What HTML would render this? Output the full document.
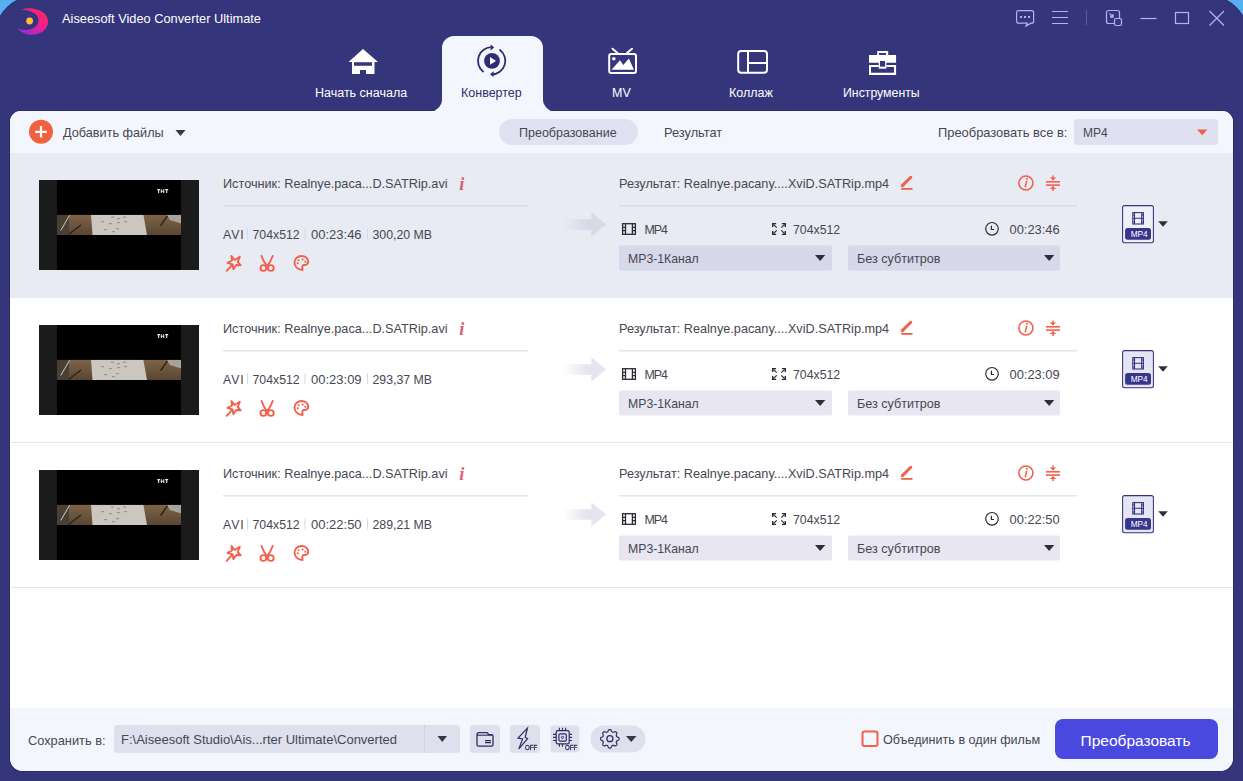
<!DOCTYPE html>
<html><head><meta charset="utf-8">
<style>
*{margin:0;padding:0;box-sizing:border-box}
html,body{width:1243px;height:781px;overflow:hidden;background:#35357b}
body{position:relative;font-family:"Liberation Sans",sans-serif;color:#474751}
.a{position:absolute}
.t{position:absolute;white-space:nowrap;line-height:1}
svg{position:absolute;overflow:visible}
.nav{color:#fff;font-size:12.5px;margin-top:1px}
.panel{left:10px;top:111px;width:1223px;height:659.6px;background:#fff;border-radius:11px 11px 13px 13px;overflow:hidden;box-shadow:0 0 0 1px #2d2d66}
.tb{left:0;top:0;width:1223px;height:42px;background:#f4f6fd}
.bb{left:0;top:597px;width:1223px;height:63px;background:#f4f6fd}
.row{left:0;width:1223px;height:145px}
.dd{background:#dadcea;border-radius:2px}
.or{fill:none;stroke:#f0604a}
</style></head><body>
<!-- desktop corners -->
<svg style="left:0;top:0" width="1243" height="30" viewBox="0 0 1243 30">
  <path d="M0 0 H18 Q7 5 0 17 Z" fill="#58aef2"/>
  <path d="M18 0 Q7 5 0 17" fill="none" stroke="#26306e" stroke-width="1.2"/>
  <path d="M1243 0 H1225.5 Q1236 5 1243 16.5 Z" fill="#58aef2"/>
  <path d="M1225.5 0 Q1236 5 1243 16.5" fill="none" stroke="#26306e" stroke-width="1.2"/>
</svg>

<!-- title bar -->
<svg style="left:0;top:0" width="1243" height="40" viewBox="0 0 1243 40">
  <defs>
    <linearGradient id="lg1" x1="0" y1="1" x2="1" y2="0">
      <stop offset="0" stop-color="#8a2cf0"/><stop offset="0.6" stop-color="#f0208a"/><stop offset="1" stop-color="#ff2a5a"/>
    </linearGradient>
  </defs>
  <defs><radialGradient id="rg1"><stop offset="0" stop-color="#3030a0"/><stop offset="1" stop-color="#35357b" stop-opacity="0"/></radialGradient>
  <filter id="bl1" x="-20%" y="-20%" width="140%" height="140%"><feGaussianBlur stdDeviation="0.5"/></filter></defs>
  <circle cx="29" cy="21" r="11" fill="url(#rg1)"/>
  <path d="M21 9.5 C33 5.5 47.5 11 48 21 C48.5 30 39 36 28 34.5 C23 33.8 19.5 31 17.5 28 C23 31.5 37 31 38.5 21 C39.5 13 29 10 21 9.5Z" fill="url(#lg1)" filter="url(#bl1)"/>
  <circle cx="29.6" cy="21" r="3.4" fill="#ffbe2a"/>
</svg>
<div class="t" style="left:62px;top:13px;font-size:12.8px;color:#fff">Aiseesoft Video Converter Ultimate</div>

<svg style="left:0;top:0" width="1243" height="40" viewBox="0 0 1243 40" fill="none" stroke="#b5b3ee" stroke-width="1.2">
  <!-- chat -->
  <path d="M1018.6 10.6 H1031.6 Q1033.6 10.6 1033.6 12.6 V21.2 Q1033.6 23.2 1031.6 23.2 H1031 L1026 26 L1027.2 23.2 H1018.6 Q1016.6 23.2 1016.6 21.2 V12.6 Q1016.6 10.6 1018.6 10.6Z"/>
  <rect x="1020" y="16" width="2" height="2" fill="#b5b3ee" stroke="none"/>
  <rect x="1024" y="16" width="2" height="2" fill="#b5b3ee" stroke="none"/>
  <rect x="1028" y="16" width="2" height="2" fill="#b5b3ee" stroke="none"/>
  <!-- menu -->
  <path d="M1052 11.5 H1068 M1052 17.5 H1068 M1052 23.5 H1068"/>
  <!-- sep -->
  <path d="M1086.5 10 V25" stroke="#5c5aa0" stroke-width="1"/>
  <!-- mini -->
  <path d="M1114 23.5 H1108.5 Q1106.5 23.5 1106.5 21.5 V12.5 Q1106.5 10.5 1108.5 10.5 H1117.5 Q1119.5 10.5 1119.5 12.5 V18"/>
  <rect x="1114.5" y="18.5" width="7" height="7" rx="1.5"/>
  <path d="M1109.5 13.5 L1113 17 M1113 14 V17 H1110" stroke-width="1.3"/>
  <!-- min -->
  <path d="M1140.5 18.5 H1156.5"/>
  <!-- max -->
  <rect x="1175.5" y="12.5" width="13" height="11"/>
  <!-- close -->
  <path d="M1209.5 11 L1224 25.5 M1224 11 L1209.5 25.5"/>
</svg>

<!-- nav tabs -->
<svg style="left:0;top:0" width="1243" height="112" viewBox="0 0 1243 112">
  <path d="M430 111.5 A12 12 0 0 0 442 99.5 V48 A12 12 0 0 1 454 36 H531 A12 12 0 0 1 543 48 V99.5 A12 12 0 0 0 555 111.5 Z" fill="#f4f6fd"/>
  <!-- house -->
  <path d="M363 49 L348.5 62 H352 V74 H360 V70 H366 V74 H374.5 V62 H378 Z M354 62.2 V65.8 H372 V62.2 Z" fill="#fff" fill-rule="evenodd"/>
  <!-- converter -->
  <g fill="none" stroke="#2f2d70" stroke-width="1.8" stroke-linecap="round">
    <path d="M483 71.5 A13.7 13.7 0 0 1 492 47.2"/>
    <path d="M500 50 A13.7 13.7 0 0 1 492 74.5"/>
  </g>
  <path d="M490.6 44.6 L494.2 47.5 L490.6 50.4Z" fill="#2f2d70"/>
  <path d="M493.6 71.3 L490 74.2 L493.6 77.1Z" fill="#2f2d70"/>
  <circle cx="492" cy="60.8" r="7.9" fill="#2f2d78"/>
  <path d="M490 57 L496 60.9 L490 64.8Z" fill="#fff"/>
  <!-- MV -->
  <g fill="none" stroke="#fff" stroke-width="2">
    <rect x="609.2" y="54" width="26.8" height="19" rx="2"/>
    <path d="M612.5 48.7 L617.5 53 M632 48.7 L627 53" stroke-linecap="round"/>
  </g>
  <circle cx="613.8" cy="58.7" r="1.8" fill="#fff"/>
  <path d="M611.5 69.7 L620 60.2 L623.3 65.1 L628.9 58.4 L634 69.7Z" fill="#fff"/>
  <!-- collage -->
  <g fill="none" stroke="#fff" stroke-width="2">
    <rect x="738.2" y="51" width="28.8" height="21.8" rx="3"/>
    <path d="M748 51 V72.8 M748 63 H767"/>
  </g>
  <!-- tools -->
  <path d="M877.2 51 H888.2 V55.1 H896.1 V62.8 H869 V55.1 H877.2Z M879 53 V55.1 H886 V53Z" fill="#fff" fill-rule="evenodd"/>
  <path d="M869 65.1 H878.7 V68.7 H886.4 V65.1 H896.1 V75.1 H869Z M871 67.1 V72.8 H894 V67.1 H886.4 V68.7 Q886.4 68.7 886.4 68.7 H878.7 V67.1Z" fill="#fff" fill-rule="evenodd"/>
  <path d="M878.7 61 H886.4 V68.7 H878.7Z" fill="#fff"/>
  <path d="M880 61 H885.1 V66.6 H880Z" fill="#35357b"/>
</svg>
<div class="t nav" style="left:315px;top:86px">Начать сначала</div>
<div class="t nav" style="left:461px;top:86px;color:#2f2e6e">Конвертер</div>
<div class="t nav" style="left:612px;top:86px">MV</div>
<div class="t nav" style="left:729px;top:86px">Коллаж</div>
<div class="t nav" style="left:843px;top:86px;font-size:12.3px">Инструменты</div>

<!-- panel -->
<div class="a panel">
  <div class="a tb"></div>
  <div class="a row" style="top:42px;background:#e8ebf4"></div>
  <div class="a" style="left:1px;top:331px;width:1222px;height:1px;background:#e6e6ea"></div>
  <div class="a" style="left:1px;top:476px;width:1222px;height:1px;background:#e6e6ea"></div>
  <div class="a bb"></div>
</div>

<svg style="left:0;top:0" width="1243" height="120" viewBox="0 0 1243 120"><defs><clipPath id="tabc"><rect x="400" y="104" width="200" height="8"/></clipPath></defs><path clip-path="url(#tabc)" d="M430 111.5 A12 12 0 0 0 442 99.5 V48 A12 12 0 0 1 454 36 H531 A12 12 0 0 1 543 48 V99.5 A12 12 0 0 0 555 111.5 Z" fill="#f4f6fd"/><rect x="436" y="110" width="113" height="2" fill="#f4f6fd"/></svg>
<!-- ROWS START -->
<!-- row 1 -->
<div class="a" style="left:0;top:0px">
<svg style="left:0;top:150px" width="1243" height="150" viewBox="0 150 1243 150">
  <defs><clipPath id="thc0"><rect x="57" y="214.7" width="124" height="20.3"/></clipPath><filter id="thb0"><feGaussianBlur stdDeviation="0.45"/></filter><linearGradient id="wd0" x1="0" y1="0" x2="0" y2="1"><stop offset="0" stop-color="#7e6447"/><stop offset="1" stop-color="#594633"/></linearGradient></defs>
  <!-- thumbnail -->
  <rect x="39" y="180" width="160" height="90" fill="#1b1b1b"/>
  <rect x="57" y="180" width="124" height="90" fill="#000"/>
  <g clip-path="url(#thc0)" filter="url(#thb0)">
    <rect x="57" y="214.7" width="124" height="20.3" fill="url(#wd0)"/>
    <rect x="57" y="214.7" width="12" height="20.3" fill="#4a4036"/>
    <rect x="69" y="214.7" width="22" height="20.3" fill="url(#wd0)"/>
    <path d="M91 214.7 H143.4 L147 235 H92.5Z" fill="#cbc7c0"/>
    <path d="M166.5 214.7 H181 V223.5 L170 220Z" fill="#a8a29a"/>
    <path d="M69.6 215.2 L60.8 230.4" stroke="#d0cbc2" stroke-width="1"/>
    <path d="M81 225 L68.6 234.5" stroke="#2e2218" stroke-width="1.5"/>
    <path d="M167.4 215.8 L160.6 225.7" stroke="#2b2018" stroke-width="1.5"/>
    <g fill="#98948e"><rect x="111" y="216.5" width="3" height="1.2"/><rect x="117" y="218" width="3" height="1.2"/><rect x="123" y="216.5" width="3" height="1.2"/><rect x="101" y="221" width="3" height="1.2"/><rect x="109" y="223" width="3" height="1.2"/><rect x="117" y="222" width="3" height="1.2"/><rect x="104" y="229" width="3" height="1.2"/><rect x="116" y="228" width="3" height="1.2"/><rect x="124" y="221" width="3" height="1.2"/><rect x="112" y="231" width="3" height="1.2"/></g>
  </g>
  <g fill="#ececec"><path d="M157.3 189.6 H160 M158.6 189.6 V193" stroke="#ececec" stroke-width="1.1"/><rect x="160.8" y="189.2" width="1" height="3.8"/><rect x="163.2" y="189.2" width="1" height="3.8"/><rect x="160.8" y="190.8" width="3.4" height="0.9"/><path d="M165.2 189.6 H168.2 M166.7 189.6 V193" stroke="#ececec" stroke-width="1.1"/></g>
  <!-- separators -->
  <rect x="223" y="205" width="305" height="1.5" fill="#d9dae5"/>
  <rect x="619" y="205" width="458" height="1.5" fill="#d9dae5"/>
  <!-- meta separators -->
  <g fill="#dadbe4"><rect x="247" y="228.5" width="1" height="11"/><rect x="304.5" y="228.5" width="1" height="11"/><rect x="367" y="228.5" width="1" height="11"/></g>
  <!-- effect icons -->
  <g class="or" stroke-width="1.9" stroke-linejoin="round" stroke-linecap="round">
    <path d="M231.5 256 L234.6 260 L239.8 256.8 L237.7 262 L240.6 265.2 L236.2 265 L233.4 269.2 L232.6 264.4 L227.5 262.9 L232 260.5Z"/>
    <path d="M231.5 265.6 L226.6 270.8"/>
    <path d="M261.5 256 Q263.5 261.5 266.6 265.6 M272.7 256 Q270.7 261.5 267.6 265.6"/>
    <circle cx="263.4" cy="268" r="2.9"/><circle cx="270.8" cy="268" r="2.9"/>
    <path d="M302.5 270 C297 269.5 294.5 266 294.5 262.5 C294.5 258.5 298 256 301.5 256 C305.5 256 308.2 258.5 308.2 261.5 C308.2 264 306.5 265 304.2 265 C302.8 265 302 266 302.4 267.2 Z"/>
  </g>
  <g fill="#f0604a"><circle cx="298.6" cy="260.2" r="1.05"/><circle cx="302.6" cy="259.6" r="1.05"/><circle cx="305.3" cy="261.8" r="1.05"/><circle cx="297.8" cy="263.2" r="1.05"/></g>
  <!-- arrow -->
  <defs><linearGradient id="arg0" x1="0" x2="1"><stop offset="0" stop-color="#d8d9e8" stop-opacity="0"/><stop offset="0.55" stop-color="#d8d9e8"/></linearGradient></defs>
  <path d="M563 219.3 H591.4 V212.2 L606 224.5 L591.4 236.7 V229.7 H563Z" fill="url(#arg0)"/>
  <!-- pencil -->
  <path d="M902.3 185.6 L910.8 177.3" stroke="#f0604a" stroke-width="3" stroke-linecap="round"/>
  <rect x="901.2" y="188" width="11.3" height="1.8" fill="#f0604a"/>
  <!-- info / merge -->
  <circle cx="1025.9" cy="183" r="7" fill="none" stroke="#f0604a" stroke-width="1.6"/>
  <circle cx="1026.9" cy="178.8" r="1" fill="#f0604a"/>
  <path d="M1026.7 181.2 L1025.3 186.8" stroke="#f0604a" stroke-width="1.5" stroke-linecap="round"/>
  <g fill="#f0604a">
    <rect x="1046" y="181" width="14" height="1.6"/><rect x="1046" y="184.3" width="14" height="1.6"/>
    <rect x="1052.3" y="175.5" width="1.5" height="4.5"/><path d="M1049.6 177.6 H1056.4 L1053 180.3Z"/>
    <rect x="1052.3" y="186.5" width="1.5" height="4.5"/><path d="M1049.6 188.9 H1056.4 L1053 186.2Z"/>
  </g>
  <!-- film / resize / clock -->
  <g fill="none" stroke="#2b2b33" stroke-width="1.3">
    <rect x="622.6" y="223.7" width="12.8" height="10.6"/>
    <path d="M625.5 223.7 V234.3 M632.4 223.7 V234.3 M622.6 227.3 H625.5 M622.6 230.6 H625.5 M632.4 227.3 H635.4 M632.4 230.6 H635.4"/>
    <path d="M772.7 227 V223.6 H776.1 M785.3 227 V223.6 H781.9 M772.7 231 V234.4 H776.1 M785.3 231 V234.4 H781.9" stroke-width="1.4"/>
    <path d="M773.4 224.3 L776.7 227.6 M784.6 224.3 L781.3 227.6 M773.4 233.7 L776.7 230.4 M784.6 233.7 L781.3 230.4" stroke-width="1.2"/>
    <circle cx="992" cy="228.8" r="6.3" stroke-width="1.2"/>
    <path d="M991.4 225.8 V229.5 H994" stroke-width="1.2"/>
  </g>
  <!-- dropdowns -->
  <rect x="619" y="245.4" width="213" height="25" rx="2" fill="#d7d8ea"/>
  <rect x="848" y="245.4" width="212" height="25" rx="2" fill="#d7d8ea"/>
  <path d="M815 255 H825.3 L820.15 261Z" fill="#2e2e36"/>
  <path d="M1044 255 H1054.3 L1049.15 261Z" fill="#2e2e36"/>
  <!-- format box -->
  <rect x="1122.6" y="205.6" width="30.8" height="37.2" rx="2" fill="#eeeff8" stroke="#36357e" stroke-width="1.05"/>
  <g fill="none" stroke="#36357e" stroke-width="1.1">
    <rect x="1132.8" y="212.6" width="10.6" height="11.4"/>
    <path d="M1134.5 212.6 V224 M1141.7 212.6 V224 M1134.5 218.3 H1141.7"/>
  </g>
  <g fill="#36357e"><rect x="1132.8" y="214.5" width="1.7" height="1"/><rect x="1132.8" y="218" width="1.7" height="1"/><rect x="1132.8" y="221.5" width="1.7" height="1"/><rect x="1141.7" y="214.5" width="1.7" height="1"/><rect x="1141.7" y="218" width="1.7" height="1"/><rect x="1141.7" y="221.5" width="1.7" height="1"/></g>
  <rect x="1125.1" y="228" width="25.9" height="11.8" rx="2.5" fill="#38368a"/>
  <path d="M1158.2 221.3 H1167.8 L1163 226.7Z" fill="#2e2e36"/>
</svg>
<div class="t" style="left:223px;top:178px;font-size:12.7px">Источник: Realnye.paca...D.SATRip.avi</div>
<div class="t" style="left:459.3px;top:175.2px;font-size:18.3px;font-family:'Liberation Serif',serif;font-style:italic;font-weight:bold;color:#e25e6c">i</div>
<div class="t" style="left:223px;top:229px;font-size:12.3px;letter-spacing:0.9px">AVI</div>
<div class="t" style="left:252.5px;top:229px;font-size:12.3px">704x512</div>
<div class="t" style="left:311px;top:228px;font-size:13px">00:23:46</div>
<div class="t" style="left:372.5px;top:229px;font-size:12.3px">300,20 MB</div>
<div class="t" style="left:619px;top:178px;font-size:12.7px">Результат: Realnye.pacany....XviD.SATRip.mp4</div>
<div class="t" style="left:644.5px;top:223.5px;font-size:12.4px;letter-spacing:-1.1px">MP4</div>
<div class="t" style="left:793px;top:223.5px;font-size:12.3px">704x512</div>
<div class="t" style="left:1009.5px;top:223.5px;font-size:12.9px">00:23:46</div>
<div class="t" style="left:628px;top:253px;font-size:12.25px">MP3-1Канал</div>
<div class="t" style="left:857px;top:253px;font-size:12.6px">Без субтитров</div>
<div class="t" style="left:1130.8px;top:229.9px;font-size:8.3px;color:#fff;letter-spacing:-0.1px">MP4</div>
</div>
<!-- row 2 -->
<div class="a" style="left:0;top:145px">
<svg style="left:0;top:150px" width="1243" height="150" viewBox="0 150 1243 150">
  <defs><clipPath id="thc1"><rect x="57" y="214.7" width="124" height="20.3"/></clipPath><filter id="thb1"><feGaussianBlur stdDeviation="0.45"/></filter><linearGradient id="wd1" x1="0" y1="0" x2="0" y2="1"><stop offset="0" stop-color="#7e6447"/><stop offset="1" stop-color="#594633"/></linearGradient></defs>
  <!-- thumbnail -->
  <rect x="39" y="180" width="160" height="90" fill="#1b1b1b"/>
  <rect x="57" y="180" width="124" height="90" fill="#000"/>
  <g clip-path="url(#thc1)" filter="url(#thb1)">
    <rect x="57" y="214.7" width="124" height="20.3" fill="url(#wd1)"/>
    <rect x="57" y="214.7" width="12" height="20.3" fill="#4a4036"/>
    <rect x="69" y="214.7" width="22" height="20.3" fill="url(#wd1)"/>
    <path d="M91 214.7 H143.4 L147 235 H92.5Z" fill="#cbc7c0"/>
    <path d="M166.5 214.7 H181 V223.5 L170 220Z" fill="#a8a29a"/>
    <path d="M69.6 215.2 L60.8 230.4" stroke="#d0cbc2" stroke-width="1"/>
    <path d="M81 225 L68.6 234.5" stroke="#2e2218" stroke-width="1.5"/>
    <path d="M167.4 215.8 L160.6 225.7" stroke="#2b2018" stroke-width="1.5"/>
    <g fill="#98948e"><rect x="111" y="216.5" width="3" height="1.2"/><rect x="117" y="218" width="3" height="1.2"/><rect x="123" y="216.5" width="3" height="1.2"/><rect x="101" y="221" width="3" height="1.2"/><rect x="109" y="223" width="3" height="1.2"/><rect x="117" y="222" width="3" height="1.2"/><rect x="104" y="229" width="3" height="1.2"/><rect x="116" y="228" width="3" height="1.2"/><rect x="124" y="221" width="3" height="1.2"/><rect x="112" y="231" width="3" height="1.2"/></g>
  </g>
  <g fill="#ececec"><path d="M157.3 189.6 H160 M158.6 189.6 V193" stroke="#ececec" stroke-width="1.1"/><rect x="160.8" y="189.2" width="1" height="3.8"/><rect x="163.2" y="189.2" width="1" height="3.8"/><rect x="160.8" y="190.8" width="3.4" height="0.9"/><path d="M165.2 189.6 H168.2 M166.7 189.6 V193" stroke="#ececec" stroke-width="1.1"/></g>
  <!-- separators -->
  <rect x="223" y="205" width="305" height="1.5" fill="#e6e6e9"/>
  <rect x="619" y="205" width="458" height="1.5" fill="#e6e6e9"/>
  <!-- meta separators -->
  <g fill="#dadbe4"><rect x="247" y="228.5" width="1" height="11"/><rect x="304.5" y="228.5" width="1" height="11"/><rect x="367" y="228.5" width="1" height="11"/></g>
  <!-- effect icons -->
  <g class="or" stroke-width="1.9" stroke-linejoin="round" stroke-linecap="round">
    <path d="M231.5 256 L234.6 260 L239.8 256.8 L237.7 262 L240.6 265.2 L236.2 265 L233.4 269.2 L232.6 264.4 L227.5 262.9 L232 260.5Z"/>
    <path d="M231.5 265.6 L226.6 270.8"/>
    <path d="M261.5 256 Q263.5 261.5 266.6 265.6 M272.7 256 Q270.7 261.5 267.6 265.6"/>
    <circle cx="263.4" cy="268" r="2.9"/><circle cx="270.8" cy="268" r="2.9"/>
    <path d="M302.5 270 C297 269.5 294.5 266 294.5 262.5 C294.5 258.5 298 256 301.5 256 C305.5 256 308.2 258.5 308.2 261.5 C308.2 264 306.5 265 304.2 265 C302.8 265 302 266 302.4 267.2 Z"/>
  </g>
  <g fill="#f0604a"><circle cx="298.6" cy="260.2" r="1.05"/><circle cx="302.6" cy="259.6" r="1.05"/><circle cx="305.3" cy="261.8" r="1.05"/><circle cx="297.8" cy="263.2" r="1.05"/></g>
  <!-- arrow -->
  <defs><linearGradient id="arg1" x1="0" x2="1"><stop offset="0" stop-color="#e4e5ef" stop-opacity="0"/><stop offset="0.55" stop-color="#e4e5ef"/></linearGradient></defs>
  <path d="M563 219.3 H591.4 V212.2 L606 224.5 L591.4 236.7 V229.7 H563Z" fill="url(#arg1)"/>
  <!-- pencil -->
  <path d="M902.3 185.6 L910.8 177.3" stroke="#f0604a" stroke-width="3" stroke-linecap="round"/>
  <rect x="901.2" y="188" width="11.3" height="1.8" fill="#f0604a"/>
  <!-- info / merge -->
  <circle cx="1025.9" cy="183" r="7" fill="none" stroke="#f0604a" stroke-width="1.6"/>
  <circle cx="1026.9" cy="178.8" r="1" fill="#f0604a"/>
  <path d="M1026.7 181.2 L1025.3 186.8" stroke="#f0604a" stroke-width="1.5" stroke-linecap="round"/>
  <g fill="#f0604a">
    <rect x="1046" y="181" width="14" height="1.6"/><rect x="1046" y="184.3" width="14" height="1.6"/>
    <rect x="1052.3" y="175.5" width="1.5" height="4.5"/><path d="M1049.6 177.6 H1056.4 L1053 180.3Z"/>
    <rect x="1052.3" y="186.5" width="1.5" height="4.5"/><path d="M1049.6 188.9 H1056.4 L1053 186.2Z"/>
  </g>
  <!-- film / resize / clock -->
  <g fill="none" stroke="#2b2b33" stroke-width="1.3">
    <rect x="622.6" y="223.7" width="12.8" height="10.6"/>
    <path d="M625.5 223.7 V234.3 M632.4 223.7 V234.3 M622.6 227.3 H625.5 M622.6 230.6 H625.5 M632.4 227.3 H635.4 M632.4 230.6 H635.4"/>
    <path d="M772.7 227 V223.6 H776.1 M785.3 227 V223.6 H781.9 M772.7 231 V234.4 H776.1 M785.3 231 V234.4 H781.9" stroke-width="1.4"/>
    <path d="M773.4 224.3 L776.7 227.6 M784.6 224.3 L781.3 227.6 M773.4 233.7 L776.7 230.4 M784.6 233.7 L781.3 230.4" stroke-width="1.2"/>
    <circle cx="992" cy="228.8" r="6.3" stroke-width="1.2"/>
    <path d="M991.4 225.8 V229.5 H994" stroke-width="1.2"/>
  </g>
  <!-- dropdowns -->
  <rect x="619" y="245.4" width="213" height="25" rx="2" fill="#e7e6f1"/>
  <rect x="848" y="245.4" width="212" height="25" rx="2" fill="#e7e6f1"/>
  <path d="M815 255 H825.3 L820.15 261Z" fill="#2e2e36"/>
  <path d="M1044 255 H1054.3 L1049.15 261Z" fill="#2e2e36"/>
  <!-- format box -->
  <rect x="1122.6" y="205.6" width="30.8" height="37.2" rx="2" fill="#e5e5f6" stroke="#36357e" stroke-width="1.05"/>
  <g fill="none" stroke="#36357e" stroke-width="1.1">
    <rect x="1132.8" y="212.6" width="10.6" height="11.4"/>
    <path d="M1134.5 212.6 V224 M1141.7 212.6 V224 M1134.5 218.3 H1141.7"/>
  </g>
  <g fill="#36357e"><rect x="1132.8" y="214.5" width="1.7" height="1"/><rect x="1132.8" y="218" width="1.7" height="1"/><rect x="1132.8" y="221.5" width="1.7" height="1"/><rect x="1141.7" y="214.5" width="1.7" height="1"/><rect x="1141.7" y="218" width="1.7" height="1"/><rect x="1141.7" y="221.5" width="1.7" height="1"/></g>
  <rect x="1125.1" y="228" width="25.9" height="11.8" rx="2.5" fill="#38368a"/>
  <path d="M1158.2 221.3 H1167.8 L1163 226.7Z" fill="#2e2e36"/>
</svg>
<div class="t" style="left:223px;top:178px;font-size:12.7px">Источник: Realnye.paca...D.SATRip.avi</div>
<div class="t" style="left:459.3px;top:175.2px;font-size:18.3px;font-family:'Liberation Serif',serif;font-style:italic;font-weight:bold;color:#e25e6c">i</div>
<div class="t" style="left:223px;top:229px;font-size:12.3px;letter-spacing:0.9px">AVI</div>
<div class="t" style="left:252.5px;top:229px;font-size:12.3px">704x512</div>
<div class="t" style="left:311px;top:228px;font-size:13px">00:23:09</div>
<div class="t" style="left:372.5px;top:229px;font-size:12.3px">293,37 MB</div>
<div class="t" style="left:619px;top:178px;font-size:12.7px">Результат: Realnye.pacany....XviD.SATRip.mp4</div>
<div class="t" style="left:644.5px;top:223.5px;font-size:12.4px;letter-spacing:-1.1px">MP4</div>
<div class="t" style="left:793px;top:223.5px;font-size:12.3px">704x512</div>
<div class="t" style="left:1009.5px;top:223.5px;font-size:12.9px">00:23:09</div>
<div class="t" style="left:628px;top:253px;font-size:12.25px">MP3-1Канал</div>
<div class="t" style="left:857px;top:253px;font-size:12.6px">Без субтитров</div>
<div class="t" style="left:1130.8px;top:229.9px;font-size:8.3px;color:#fff;letter-spacing:-0.1px">MP4</div>
</div>
<!-- row 3 -->
<div class="a" style="left:0;top:290px">
<svg style="left:0;top:150px" width="1243" height="150" viewBox="0 150 1243 150">
  <defs><clipPath id="thc2"><rect x="57" y="214.7" width="124" height="20.3"/></clipPath><filter id="thb2"><feGaussianBlur stdDeviation="0.45"/></filter><linearGradient id="wd2" x1="0" y1="0" x2="0" y2="1"><stop offset="0" stop-color="#7e6447"/><stop offset="1" stop-color="#594633"/></linearGradient></defs>
  <!-- thumbnail -->
  <rect x="39" y="180" width="160" height="90" fill="#1b1b1b"/>
  <rect x="57" y="180" width="124" height="90" fill="#000"/>
  <g clip-path="url(#thc2)" filter="url(#thb2)">
    <rect x="57" y="214.7" width="124" height="20.3" fill="url(#wd2)"/>
    <rect x="57" y="214.7" width="12" height="20.3" fill="#4a4036"/>
    <rect x="69" y="214.7" width="22" height="20.3" fill="url(#wd2)"/>
    <path d="M91 214.7 H143.4 L147 235 H92.5Z" fill="#cbc7c0"/>
    <path d="M166.5 214.7 H181 V223.5 L170 220Z" fill="#a8a29a"/>
    <path d="M69.6 215.2 L60.8 230.4" stroke="#d0cbc2" stroke-width="1"/>
    <path d="M81 225 L68.6 234.5" stroke="#2e2218" stroke-width="1.5"/>
    <path d="M167.4 215.8 L160.6 225.7" stroke="#2b2018" stroke-width="1.5"/>
    <g fill="#98948e"><rect x="111" y="216.5" width="3" height="1.2"/><rect x="117" y="218" width="3" height="1.2"/><rect x="123" y="216.5" width="3" height="1.2"/><rect x="101" y="221" width="3" height="1.2"/><rect x="109" y="223" width="3" height="1.2"/><rect x="117" y="222" width="3" height="1.2"/><rect x="104" y="229" width="3" height="1.2"/><rect x="116" y="228" width="3" height="1.2"/><rect x="124" y="221" width="3" height="1.2"/><rect x="112" y="231" width="3" height="1.2"/></g>
  </g>
  <g fill="#ececec"><path d="M157.3 189.6 H160 M158.6 189.6 V193" stroke="#ececec" stroke-width="1.1"/><rect x="160.8" y="189.2" width="1" height="3.8"/><rect x="163.2" y="189.2" width="1" height="3.8"/><rect x="160.8" y="190.8" width="3.4" height="0.9"/><path d="M165.2 189.6 H168.2 M166.7 189.6 V193" stroke="#ececec" stroke-width="1.1"/></g>
  <!-- separators -->
  <rect x="223" y="205" width="305" height="1.5" fill="#e6e6e9"/>
  <rect x="619" y="205" width="458" height="1.5" fill="#e6e6e9"/>
  <!-- meta separators -->
  <g fill="#dadbe4"><rect x="247" y="228.5" width="1" height="11"/><rect x="304.5" y="228.5" width="1" height="11"/><rect x="367" y="228.5" width="1" height="11"/></g>
  <!-- effect icons -->
  <g class="or" stroke-width="1.9" stroke-linejoin="round" stroke-linecap="round">
    <path d="M231.5 256 L234.6 260 L239.8 256.8 L237.7 262 L240.6 265.2 L236.2 265 L233.4 269.2 L232.6 264.4 L227.5 262.9 L232 260.5Z"/>
    <path d="M231.5 265.6 L226.6 270.8"/>
    <path d="M261.5 256 Q263.5 261.5 266.6 265.6 M272.7 256 Q270.7 261.5 267.6 265.6"/>
    <circle cx="263.4" cy="268" r="2.9"/><circle cx="270.8" cy="268" r="2.9"/>
    <path d="M302.5 270 C297 269.5 294.5 266 294.5 262.5 C294.5 258.5 298 256 301.5 256 C305.5 256 308.2 258.5 308.2 261.5 C308.2 264 306.5 265 304.2 265 C302.8 265 302 266 302.4 267.2 Z"/>
  </g>
  <g fill="#f0604a"><circle cx="298.6" cy="260.2" r="1.05"/><circle cx="302.6" cy="259.6" r="1.05"/><circle cx="305.3" cy="261.8" r="1.05"/><circle cx="297.8" cy="263.2" r="1.05"/></g>
  <!-- arrow -->
  <defs><linearGradient id="arg2" x1="0" x2="1"><stop offset="0" stop-color="#e4e5ef" stop-opacity="0"/><stop offset="0.55" stop-color="#e4e5ef"/></linearGradient></defs>
  <path d="M563 219.3 H591.4 V212.2 L606 224.5 L591.4 236.7 V229.7 H563Z" fill="url(#arg2)"/>
  <!-- pencil -->
  <path d="M902.3 185.6 L910.8 177.3" stroke="#f0604a" stroke-width="3" stroke-linecap="round"/>
  <rect x="901.2" y="188" width="11.3" height="1.8" fill="#f0604a"/>
  <!-- info / merge -->
  <circle cx="1025.9" cy="183" r="7" fill="none" stroke="#f0604a" stroke-width="1.6"/>
  <circle cx="1026.9" cy="178.8" r="1" fill="#f0604a"/>
  <path d="M1026.7 181.2 L1025.3 186.8" stroke="#f0604a" stroke-width="1.5" stroke-linecap="round"/>
  <g fill="#f0604a">
    <rect x="1046" y="181" width="14" height="1.6"/><rect x="1046" y="184.3" width="14" height="1.6"/>
    <rect x="1052.3" y="175.5" width="1.5" height="4.5"/><path d="M1049.6 177.6 H1056.4 L1053 180.3Z"/>
    <rect x="1052.3" y="186.5" width="1.5" height="4.5"/><path d="M1049.6 188.9 H1056.4 L1053 186.2Z"/>
  </g>
  <!-- film / resize / clock -->
  <g fill="none" stroke="#2b2b33" stroke-width="1.3">
    <rect x="622.6" y="223.7" width="12.8" height="10.6"/>
    <path d="M625.5 223.7 V234.3 M632.4 223.7 V234.3 M622.6 227.3 H625.5 M622.6 230.6 H625.5 M632.4 227.3 H635.4 M632.4 230.6 H635.4"/>
    <path d="M772.7 227 V223.6 H776.1 M785.3 227 V223.6 H781.9 M772.7 231 V234.4 H776.1 M785.3 231 V234.4 H781.9" stroke-width="1.4"/>
    <path d="M773.4 224.3 L776.7 227.6 M784.6 224.3 L781.3 227.6 M773.4 233.7 L776.7 230.4 M784.6 233.7 L781.3 230.4" stroke-width="1.2"/>
    <circle cx="992" cy="228.8" r="6.3" stroke-width="1.2"/>
    <path d="M991.4 225.8 V229.5 H994" stroke-width="1.2"/>
  </g>
  <!-- dropdowns -->
  <rect x="619" y="245.4" width="213" height="25" rx="2" fill="#e7e6f1"/>
  <rect x="848" y="245.4" width="212" height="25" rx="2" fill="#e7e6f1"/>
  <path d="M815 255 H825.3 L820.15 261Z" fill="#2e2e36"/>
  <path d="M1044 255 H1054.3 L1049.15 261Z" fill="#2e2e36"/>
  <!-- format box -->
  <rect x="1122.6" y="205.6" width="30.8" height="37.2" rx="2" fill="#e5e5f6" stroke="#36357e" stroke-width="1.05"/>
  <g fill="none" stroke="#36357e" stroke-width="1.1">
    <rect x="1132.8" y="212.6" width="10.6" height="11.4"/>
    <path d="M1134.5 212.6 V224 M1141.7 212.6 V224 M1134.5 218.3 H1141.7"/>
  </g>
  <g fill="#36357e"><rect x="1132.8" y="214.5" width="1.7" height="1"/><rect x="1132.8" y="218" width="1.7" height="1"/><rect x="1132.8" y="221.5" width="1.7" height="1"/><rect x="1141.7" y="214.5" width="1.7" height="1"/><rect x="1141.7" y="218" width="1.7" height="1"/><rect x="1141.7" y="221.5" width="1.7" height="1"/></g>
  <rect x="1125.1" y="228" width="25.9" height="11.8" rx="2.5" fill="#38368a"/>
  <path d="M1158.2 221.3 H1167.8 L1163 226.7Z" fill="#2e2e36"/>
</svg>
<div class="t" style="left:223px;top:178px;font-size:12.7px">Источник: Realnye.paca...D.SATRip.avi</div>
<div class="t" style="left:459.3px;top:175.2px;font-size:18.3px;font-family:'Liberation Serif',serif;font-style:italic;font-weight:bold;color:#e25e6c">i</div>
<div class="t" style="left:223px;top:229px;font-size:12.3px;letter-spacing:0.9px">AVI</div>
<div class="t" style="left:252.5px;top:229px;font-size:12.3px">704x512</div>
<div class="t" style="left:311px;top:228px;font-size:13px">00:22:50</div>
<div class="t" style="left:372.5px;top:229px;font-size:12.3px">289,21 MB</div>
<div class="t" style="left:619px;top:178px;font-size:12.7px">Результат: Realnye.pacany....XviD.SATRip.mp4</div>
<div class="t" style="left:644.5px;top:223.5px;font-size:12.4px;letter-spacing:-1.1px">MP4</div>
<div class="t" style="left:793px;top:223.5px;font-size:12.3px">704x512</div>
<div class="t" style="left:1009.5px;top:223.5px;font-size:12.9px">00:22:50</div>
<div class="t" style="left:628px;top:253px;font-size:12.25px">MP3-1Канал</div>
<div class="t" style="left:857px;top:253px;font-size:12.6px">Без субтитров</div>
<div class="t" style="left:1130.8px;top:229.9px;font-size:8.3px;color:#fff;letter-spacing:-0.1px">MP4</div>
</div>
<!-- ROWS END -->

<!-- toolbar -->
<svg style="left:0;top:0" width="1243" height="160" viewBox="0 0 1243 160">
  <circle cx="41" cy="131.8" r="12" fill="#f0623f"/>
  <path d="M35.2 131.8 H46.8 M41 126 V137.6" stroke="#fff" stroke-width="2.2"/>
  <path d="M175.5 130 H185.5 L180.5 136Z" fill="#38383f"/>
  <rect x="499" y="119" width="139" height="26" rx="13" fill="#e1e2f1"/>
  <rect x="1074" y="119" width="144" height="26" rx="3" fill="#e0e1f0"/>
  <path d="M1197 129.5 H1207.5 L1202.25 135.2Z" fill="#f0604a"/>
</svg>
<div class="t" style="left:63px;top:127px;font-size:12.7px">Добавить файлы</div>
<div class="t" style="left:519px;top:127px;font-size:12.5px">Преобразование</div>
<div class="t" style="left:664px;top:127px;font-size:12.8px">Результат</div>
<div class="t" style="left:938px;top:127px;font-size:12.9px">Преобразовать все в:</div>
<div class="t" style="left:1083px;top:127px;font-size:12px">MP4</div>

<!-- bottom bar -->
<svg style="left:0;top:700px" width="1243" height="81" viewBox="0 700 1243 81">
  <rect x="114" y="725" width="346" height="28" rx="3" fill="#dfe0ee"/>
  <path d="M424.5 725 V753" stroke="#cfd0e0" stroke-width="1"/>
  <path d="M437.5 736 H447 L442.25 742Z" fill="#38383f"/>
  <rect x="470" y="725" width="30" height="28" rx="3" fill="#dfe0ee"/>
  <rect x="510" y="725" width="30" height="28" rx="3" fill="#dfe0ee"/>
  <rect x="550.5" y="725.5" width="29" height="27" rx="3" fill="#dfe0ee"/>
  <rect x="590.5" y="725.5" width="55" height="27" rx="13.5" fill="#dfe0ee"/>
  <g fill="none" stroke="#2f2d62" stroke-width="1.5" stroke-linejoin="round">
    <!-- folder -->
    <path d="M477 735 Q477 732.6 479 732.6 H486.5 Q488 732.6 488.5 734.6 H491.5 Q493 734.6 493 736.2 V744.6 Q493 746.2 491.5 746.2 H478.5 Q477 746.2 477 744.6Z" stroke-width="1.3"/>
    <path d="M477 735.2 H493" stroke-width="1.1"/>
    <path d="M485 740.6 H491 M485 742.6 H491" stroke-width="1.2"/>
    <!-- bolt -->
    <path d="M527.4 728.2 L518 738.2 L522.6 738.9 L518.8 748.9 L527.6 738.6 L525.2 737.3Z" stroke-width="1.2" stroke-linejoin="miter"/>
    <!-- chip -->
    <rect x="556.2" y="730.7" width="13" height="13.2" rx="1.5" stroke-width="1.2"/>
    <rect x="558.9" y="733.8" width="7.4" height="7.4" rx="1.2" stroke-width="1.2"/>
    <circle cx="562.5" cy="737.4" r="1.1" stroke-width="1"/>
    <path d="M559.4 727.8 V730.5 M562.5 727.8 V730.5 M565.6 727.8 V730.5 M553 734.4 H556 M553 737.4 H556 M553 740.5 H556 M569.4 734.4 H572 M569.4 737.4 H572 M569.4 740.5 H572 M559.4 744 V746.7 M562.5 744 V746.7" stroke-width="1.1"/>
    <!-- gear -->
    <path id="gear" d="M619.10 738.80 L619.06 739.16 L618.95 739.52 L618.75 739.86 L618.46 740.17 L617.89 740.41 L617.32 740.60 L617.01 740.83 L616.77 741.06 L616.58 741.30 L616.45 741.56 L616.37 741.83 L616.33 742.13 L616.33 742.46 L616.39 742.84 L616.66 743.38 L616.89 743.95 L616.88 744.38 L616.78 744.76 L616.61 745.09 L616.38 745.38 L616.09 745.61 L615.76 745.78 L615.38 745.88 L614.95 745.89 L614.38 745.66 L613.84 745.39 L613.46 745.33 L613.13 745.33 L612.83 745.37 L612.56 745.45 L612.30 745.58 L612.06 745.77 L611.83 746.01 L611.60 746.32 L611.41 746.89 L611.17 747.46 L610.86 747.75 L610.52 747.95 L610.16 748.06 L609.80 748.10 L609.44 748.06 L609.08 747.95 L608.74 747.75 L608.43 747.46 L608.19 746.89 L608.00 746.32 L607.77 746.01 L607.54 745.77 L607.30 745.58 L607.04 745.45 L606.77 745.37 L606.47 745.33 L606.14 745.33 L605.76 745.39 L605.22 745.66 L604.65 745.89 L604.22 745.88 L603.84 745.78 L603.51 745.61 L603.22 745.38 L602.99 745.09 L602.82 744.76 L602.72 744.38 L602.71 743.95 L602.94 743.38 L603.21 742.84 L603.27 742.46 L603.27 742.13 L603.23 741.83 L603.15 741.56 L603.02 741.30 L602.83 741.06 L602.59 740.83 L602.28 740.60 L601.71 740.41 L601.14 740.17 L600.85 739.86 L600.65 739.52 L600.54 739.16 L600.50 738.80 L600.54 738.44 L600.65 738.08 L600.85 737.74 L601.14 737.43 L601.71 737.19 L602.28 737.00 L602.59 736.77 L602.83 736.54 L603.02 736.30 L603.15 736.04 L603.23 735.77 L603.27 735.47 L603.27 735.14 L603.21 734.76 L602.94 734.22 L602.71 733.65 L602.72 733.22 L602.82 732.84 L602.99 732.51 L603.22 732.22 L603.51 731.99 L603.84 731.82 L604.22 731.72 L604.65 731.71 L605.22 731.94 L605.76 732.21 L606.14 732.27 L606.47 732.27 L606.77 732.23 L607.04 732.15 L607.30 732.02 L607.54 731.83 L607.77 731.59 L608.00 731.28 L608.19 730.71 L608.43 730.14 L608.74 729.85 L609.08 729.65 L609.44 729.54 L609.80 729.50 L610.16 729.54 L610.52 729.65 L610.86 729.85 L611.17 730.14 L611.41 730.71 L611.60 731.28 L611.83 731.59 L612.06 731.83 L612.30 732.02 L612.56 732.15 L612.83 732.23 L613.13 732.27 L613.46 732.27 L613.84 732.21 L614.38 731.94 L614.95 731.71 L615.38 731.72 L615.76 731.82 L616.09 731.99 L616.38 732.22 L616.61 732.51 L616.78 732.84 L616.88 733.22 L616.89 733.65 L616.66 734.22 L616.39 734.76 L616.33 735.14 L616.33 735.47 L616.37 735.77 L616.45 736.04 L616.58 736.30 L616.77 736.54 L617.01 736.77 L617.32 737.00 L617.89 737.19 L618.46 737.43 L618.75 737.74 L618.95 738.08 L619.06 738.44 L619.10 738.80Z" stroke-width="1.2"/>
    <circle cx="609.9" cy="738.7" r="3" stroke-width="1.3"/>
  </g>
    <path d="M626 736 H636.5 L631.25 742Z" fill="#38383f"/>
  <rect x="862.5" y="731.5" width="15" height="14.5" rx="2" fill="none" stroke="#f0604a" stroke-width="2"/>
  <rect x="1055" y="719" width="163" height="40" rx="8" fill="#4a49df"/>
</svg>
<div class="t" style="left:525.2px;top:743.5px;font-size:7.2px;color:#2a2950;-webkit-text-stroke:0.3px #2a2950;letter-spacing:0;transform:scaleX(0.86);transform-origin:0 0">OFF</div>
<div class="t" style="left:565.2px;top:743.5px;font-size:7.2px;color:#2a2950;-webkit-text-stroke:0.3px #2a2950;letter-spacing:0;transform:scaleX(0.86);transform-origin:0 0">OFF</div>
<div class="t" style="left:28px;top:734.7px;font-size:12.8px">Сохранить в:</div>
<div class="t" style="left:121px;top:733.2px;font-size:13px">F:\Aiseesoft Studio\Ais...rter Ultimate\Converted</div>
<div class="t" style="left:883px;top:733.5px;font-size:12.6px">Объединить в один фильм</div>
<div class="t" style="left:1080.5px;top:733.2px;font-size:15.5px;color:#fff">Преобразовать</div>

</body></html>
